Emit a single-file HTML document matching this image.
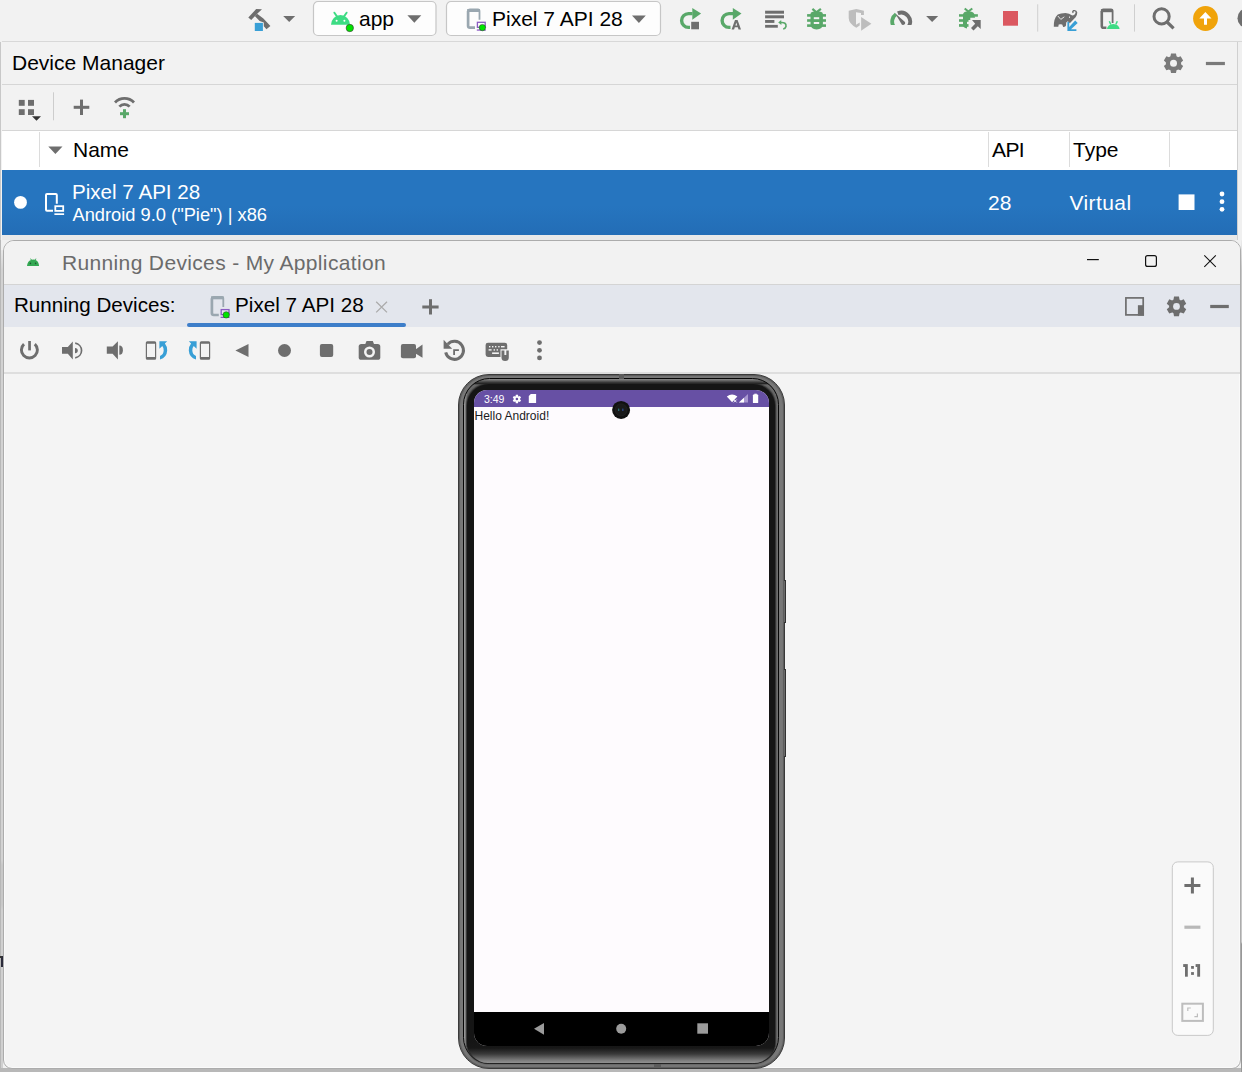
<!DOCTYPE html>
<html><head><meta charset="utf-8">
<style>
*{box-sizing:border-box;margin:0;padding:0}
html,body{width:1242px;height:1072px;overflow:hidden;background:#c4c4c4;font-family:"Liberation Sans",sans-serif;color:#000}
.a{position:absolute}
svg{position:absolute;overflow:visible}
.t{position:absolute;white-space:pre;line-height:1}
</style></head><body>

<!-- background area behind (left strip / top) -->
<div class="a" style="left:0;top:0;width:1242px;height:1072px;background:#f0f0f0"></div>
<div class="a" style="left:0;top:42px;width:1px;height:1030px;background:#b8b8b8"></div>
<div class="a" style="left:1px;top:250px;width:2px;height:822px;background:linear-gradient(#e8e8e8 0px,#d2d2d2 20px,#d2d2d2 610px,#c8c8c8 615px,#c8c8c8 655px,#d0d0d0 660px)"></div>
<div class="a" style="left:0;top:1068px;width:1242px;height:4px;background:#b8b8b8"></div>
<div class="a" style="left:1241px;top:240px;width:1px;height:832px;background:linear-gradient(#ececec 0px,#c8c8c8 30px,#c8c8c8 702px,#989898 704px)"></div>
<!-- ===== Top toolbar ===== -->
<div class="a" id="topbar" style="left:0;top:0;width:1242px;height:41px;background:#f2f2f2"></div>
<div class="a" style="left:2px;top:41px;width:1240px;height:1px;background:#d8d8d8"></div>

<!-- ===== Device Manager panel ===== -->
<div class="a" style="left:0;top:42px;width:1238px;height:198px;background:#f2f2f2;border-left:1px solid #c8c8c8;border-right:1px solid #d0d0d0"></div>
<div class="t" style="left:12px;top:52px;font-size:21px;color:#000">Device Manager</div>
<div class="a" style="left:2px;top:84px;width:1235px;height:1px;background:#d6d6d6"></div>
<div class="a" style="left:2px;top:130px;width:1235px;height:1px;background:#d6d6d6"></div>
<div class="a" style="left:2px;top:131px;width:1235px;height:39px;background:#fff"></div>
<div class="a" style="left:39px;top:132px;width:1px;height:35px;background:#dcdcdc"></div>
<div class="a" style="left:988px;top:132px;width:1px;height:35px;background:#dcdcdc"></div>
<div class="a" style="left:1069px;top:132px;width:1px;height:35px;background:#dcdcdc"></div>
<div class="a" style="left:1169px;top:132px;width:1px;height:35px;background:#dcdcdc"></div>
<div class="t" style="left:73px;top:138.5px;font-size:21px">Name</div>
<div class="t" style="left:992px;top:138.5px;font-size:21px;letter-spacing:-0.6px">API</div>
<div class="t" style="left:1073px;top:138.5px;font-size:21px">Type</div>
<div class="a" style="left:2px;top:170px;width:1235px;height:65px;background:linear-gradient(#2675bf 0%,#2675bf 55%,#236db6 100%)"></div>
<div class="a" style="left:2px;top:235px;width:1235px;height:5px;background:#e9e9e9"></div>
<div class="t" style="left:72px;top:181.5px;font-size:20.6px;color:#fff">Pixel 7 API 28</div>
<div class="t" style="left:72.5px;top:206px;font-size:18.3px;color:#fff">Android 9.0 ("Pie") | x86</div>
<div class="t" style="left:988px;top:192px;font-size:21px;color:#fff">28</div>
<div class="t" style="left:1069.5px;top:192px;font-size:21px;color:#fff;letter-spacing:0.4px">Virtual</div>

<!-- ===== Running Devices window ===== -->
<div class="a" id="win" style="left:3px;top:240px;width:1238px;height:829px;background:#f4f4f4;border:1px solid #acacac;border-radius:11px 10px 9px 9px;overflow:hidden;box-shadow:inset 0 0 0 1px #fafafa">
  <div class="a" style="left:0;top:0;width:1236px;height:43px;background:#f2f2f2"></div>
  <div class="a" style="left:0;top:43px;width:1236px;height:1px;background:#d4d4d4"></div>
  <div class="a" style="left:0;top:44px;width:1236px;height:42px;background:#e3e6ed"></div>
  <div class="a" style="left:0;top:86px;width:1236px;height:46px;background:#f3f3f3"></div>
  <div class="a" style="left:0;top:131px;width:1236px;height:2px;background:#dedede"></div>
</div>
<div class="t" style="left:62px;top:252px;font-size:21px;color:#6b6b6b;letter-spacing:0.35px">Running Devices - My Application</div>
<div class="t" style="left:14px;top:295px;font-size:20.6px">Running Devices:</div>
<div class="t" style="left:235px;top:295px;font-size:20.7px">Pixel 7 API 28</div>
<div class="a" style="left:187px;top:323px;width:219px;height:4px;border-radius:2px;background:#3d7ec9"></div>


<!-- ===== ICON OVERLAY ===== -->
<svg width="1242" height="1072" viewBox="0 0 1242 1072" style="left:0;top:0">
<!-- top toolbar -->
<g fill="#6e6e6e">
  <!-- hammer -->
  <polygon points="248.3,17.5 251.2,19.9 257.2,13.8 262,9.2 256.2,9"/>
  <polygon points="257.1,13.7 263.4,18.4 270.4,25.9 266.5,29.2 263.8,26.3 263.8,22.5 259.6,20.9 254.8,16"/>
  <rect x="254.8" y="22.9" width="8.1" height="8.1" fill="#389fd6"/>
  <polygon points="283.2,16 295.2,16 289.2,22"/>
</g>
<!-- app combo -->
<rect x="313.5" y="1.5" width="122.5" height="34" rx="4.5" fill="#fdfdfd" stroke="#c6c6c6" stroke-width="1.2"/>
<g fill="#3ddc84">
  <path d="M331,24.8 A9.5,9.7 0 0 1 350,24.8 Z"/>
  <line x1="334.4" y1="12.7" x2="337" y2="16.5" stroke="#3ddc84" stroke-width="2" stroke-linecap="round"/>
  <line x1="346.6" y1="12.7" x2="344" y2="16.5" stroke="#3ddc84" stroke-width="2" stroke-linecap="round"/>
</g>
<circle cx="336.6" cy="20.8" r="1" fill="#fff"/><circle cx="344.4" cy="20.8" r="1" fill="#fff"/>
<circle cx="349.8" cy="28" r="3.7" fill="#00e400" stroke="#40303a" stroke-width="0.6"/>
<polygon points="407.4,15.2 421.3,15.2 414.35,22.8" fill="#6e6e6e"/>
<!-- device combo -->
<rect x="446.5" y="1.5" width="214" height="34" rx="4.5" fill="#fdfdfd" stroke="#c6c6c6" stroke-width="1.2"/>
<path d="M468.1,19.5 V11.3 Q468.1,9.5 470,9.5 H478 Q479.5,9.5 479.5,11.3 V19.7" fill="none" stroke="#9aa7b0" stroke-width="1.8"/>
<rect x="467.2" y="9" width="12.7" height="3" fill="#9aa7b0"/>
<path d="M468.1,11 V26 Q468.1,27.7 470,27.7 H475" fill="none" stroke="#9aa7b0" stroke-width="2.7"/>
<rect x="477.4" y="22.3" width="7.8" height="5" fill="none" stroke="#8a5cc2" stroke-width="1.3"/>
<rect x="476.8" y="29.4" width="9" height="1.3" fill="#8a5cc2"/>
<circle cx="482.4" cy="27.6" r="3.2" fill="#00e400" stroke="#30303a" stroke-width="0.5"/>
<polygon points="632,15.5 645.8,15.5 638.9,23" fill="#6e6e6e"/>

<!-- rerun -->
<g id="rerun">
  <path d="M690,27.4 H688.5 A6.9,6.9 0 0 1 688.5,13.6 H692.5" fill="none" stroke="#59a869" stroke-width="3.4"/>
  <polygon points="692.3,7.9 701.1,13.6 692.3,19.8" fill="#59a869"/>
  <rect x="691.2" y="21.8" width="7.8" height="7.5" fill="#6e6e6e"/>
</g>
<g>
  <path d="M730.5,27.4 H729 A6.9,6.9 0 0 1 729,13.6 H733" fill="none" stroke="#59a869" stroke-width="3.4"/>
  <polygon points="732.8,7.9 741.5,13.6 732.8,19.8" fill="#59a869"/>
  <path d="M731.6,29.4 L735,20 H737.6 L741,29.4 H738.5 L737.8,27.3 H734.8 L734.1,29.4 Z M735.4,25.4 H737.2 L736.3,22.6 Z" fill="#6e6e6e" fill-rule="evenodd"/>
</g>
<!-- apply code changes -->
<g fill="#6e6e6e">
  <rect x="765.1" y="10.7" width="18.9" height="3"/>
  <rect x="765.1" y="15.3" width="18.9" height="3"/>
  <rect x="765.1" y="20" width="9.3" height="2.9"/>
  <rect x="765.1" y="24.9" width="12.7" height="2.8"/>
</g>
<path d="M780.5,22.6 Q786.5,22 786,26.5 Q785.5,28.5 783.2,29" fill="none" stroke="#59a869" stroke-width="1.6"/>
<polygon points="778.2,22.4 781.2,20 781.4,25" fill="#59a869"/>
<!-- debug bug -->
<g fill="#59a869">
  <path d="M812.4,8.8 L816.4,12.3 L820.9,8.8" fill="none" stroke="#59a869" stroke-width="2.2"/>
  <path d="M810.5,14 Q810.5,11.3 816.6,11.3 Q822.9,11.3 822.9,14 V24 Q822.9,29.4 816.6,29.4 Q810.5,29.4 810.5,24 Z"/>
  <rect x="807.1" y="14.1" width="18.9" height="2.6"/>
  <rect x="807.1" y="19.2" width="18.9" height="2.6"/>
  <rect x="807.1" y="24.3" width="18.9" height="2.6"/>
</g>
<rect x="813.8" y="17.2" width="5.4" height="2" fill="#f2f2f2"/>
<rect x="813.8" y="22" width="5.4" height="2" fill="#f2f2f2"/>
<!-- coverage -->
<g fill="#b4b4b4">
  <path fill="#bdbdbd" d="M848.7,10.7 L856.3,9.1 L863.9,10.7 V14.9 H861 V13 L856,12.3 V24.8 L859.7,22.4 V25.4 L856.3,27.7 Q848.7,23.5 848.7,18 Z"/>
  <polygon fill="#bdbdbd" points="861.1,17 871.4,23.8 861.1,30.8"/>
</g>
<!-- profiler -->
<clipPath id="gclip"><rect x="880" y="0" width="40" height="24.9"/></clipPath>
<g clip-path="url(#gclip)">
<path d="M893.36,26 A8.95,8.95 0 0 1 896.0,14.27" fill="none" stroke="#59a869" stroke-width="3.8"/>
<path d="M897.8,13.3 A8.95,8.95 0 0 1 908.94,26" fill="none" stroke="#6e6e6e" stroke-width="3.8"/>
</g>
<path d="M895.1,13.3 L905,22 Q905.8,24.6 903.2,24.9 Q901.6,24.9 901.2,23.4 Z" fill="#6e6e6e"/>
<polygon points="926.1,16.1 938.2,16.1 932.15,21.9" fill="#6e6e6e"/>
<!-- attach debugger -->
<g fill="#59a869">
  <path d="M964.7,8.5 L968.3,11.5 L972.3,8.5" fill="none" stroke="#59a869" stroke-width="2.1"/>
  <path d="M963,14.2 Q963.5,11.2 968.5,11.2 Q973,11.2 974.3,14 L975,17.8 H970.3 V20 H967 V28.5 Q963,27.5 963,25 Z"/>
  <rect x="959" y="14.2" width="18.9" height="2.5"/>
  <rect x="959" y="19.2" width="9.5" height="2.6"/>
  <rect x="959" y="24.1" width="9.5" height="2.7"/>
</g>
<polygon points="972,20.1 980.7,20.1 980.7,29.1 977.8,26.2 973.5,30.5 971,28 975.2,23.7" fill="#6e6e6e"/>
<rect x="1003" y="11" width="15" height="14.7" fill="#db5860"/>
<rect x="1037.2" y="4.3" width="1" height="27.3" fill="#cfcfcf"/>
<!-- gradle -->
<path d="M1053.8,26.8 Q1053.6,18.5 1057.8,14.6 Q1060.5,13 1065.5,13 Q1069.5,13.3 1071.8,15.2 L1073,15.6 Q1075.6,14.6 1075.6,12.3 Q1075.3,10.9 1073.9,11.3 Q1073.3,11.8 1073.8,12.6 L1072.4,13.3 Q1071.4,11.2 1073.2,10.1 Q1076.8,9.2 1077.3,12.6 Q1077.2,15.6 1075.6,17.2 L1069.8,23.2 L1067.8,21.3 L1066.2,22.5 L1066,25.6 Q1065.4,27.2 1063.2,26.9 L1062.2,24.6 Q1060.4,24 1058.7,24.6 L1058.3,26.8 Z" fill="#6e6e6e"/>
<polyline points="1057.9,16 1060.8,19.4 1064.3,16.8" fill="none" stroke="#f2f2f2" stroke-width="0.9"/>
<rect x="1069.1" y="16.5" width="0.9" height="1.4" fill="#f2f2f2"/>
<polygon points="1075.2,20.5 1077.7,23 1071,29.3 1076.4,29.3 1076.4,31 1067.4,31 1067.4,22 1069.2,22 1069.2,27.1" fill="#389fd6"/>
<!-- device manager -->
<path d="M1101.8,22 V11 Q1101.8,9.4 1103.4,9.4 H1111 Q1112.6,9.4 1112.6,11 V23" fill="none" stroke="#6e6e6e" stroke-width="1.8"/>
<rect x="1100.9" y="9.2" width="11.9" height="3" fill="#6e6e6e"/>
<path d="M1101.8,11 V26 Q1101.8,27.8 1103.4,27.8 H1106.4" fill="none" stroke="#6e6e6e" stroke-width="2.6"/>
<path d="M1107,29.1 A6.3,5.2 0 0 1 1119.6,29.1 Z" fill="#3ddc84"/>
<line x1="1109.3" y1="21.3" x2="1110.8" y2="24.5" stroke="#3ddc84" stroke-width="1.5"/>
<line x1="1117.3" y1="21.3" x2="1115.8" y2="24.5" stroke="#3ddc84" stroke-width="1.5"/>
<rect x="1134" y="4.3" width="1" height="27.3" fill="#cfcfcf"/>
<!-- search -->
<circle cx="1161.6" cy="16.4" r="7.6" fill="none" stroke="#6e6e6e" stroke-width="3"/>
<line x1="1167" y1="22" x2="1173.6" y2="28.4" stroke="#6e6e6e" stroke-width="3.2"/>
<circle cx="1205.5" cy="18.5" r="12.4" fill="#f0a30a"/>
<polygon points="1199.3,18.6 1205.4,12 1211.5,18.6 1207,18.6 1207,24.7 1204,24.7 1204,18.6" fill="#fff"/>
<circle cx="1248" cy="18.2" r="10.5" fill="#6e6e6e"/>

<!-- Device Manager header icons -->
<g fill="#7a7a7a">
  <path d="M1170.46,56.33 L1171.03,53.61 L1175.97,53.61 L1176.54,56.33 L1176.92,56.52 L1177.30,56.72 L1177.66,56.94 L1178.01,57.19 L1180.65,56.31 L1183.13,60.60 L1181.05,62.45 L1181.09,62.87 L1181.10,63.30 L1181.09,63.73 L1181.05,64.15 L1183.13,66.00 L1180.65,70.29 L1178.01,69.41 L1177.66,69.66 L1177.30,69.88 L1176.92,70.08 L1176.54,70.27 L1175.97,72.99 L1171.03,72.99 L1170.46,70.27 L1170.08,70.08 L1169.70,69.88 L1169.34,69.66 L1168.99,69.41 L1166.35,70.29 L1163.87,66.00 L1165.95,64.15 L1165.91,63.73 L1165.90,63.30 L1165.91,62.87 L1165.95,62.45 L1163.87,60.60 L1166.35,56.31 L1168.99,57.19 L1169.34,56.94 L1169.70,56.72 L1170.08,56.52 Z"/>
  <rect x="1205.9" y="61.9" width="19" height="3.2"/>
</g>
<circle cx="1173.5" cy="63.3" r="3.5" fill="#f2f2f2"/>
<!-- DM toolbar -->
<g fill="#6e6e6e">
  <rect x="18.8" y="99.9" width="5.9" height="5.9"/>
  <rect x="28" y="99.9" width="6" height="5.9"/>
  <rect x="18.8" y="109.2" width="5.9" height="5.8"/>
  <rect x="28" y="109.2" width="6" height="5.8"/>
  <polygon points="32,116.2 41,116.2 36.5,120.7" fill="#333"/>
  <rect x="53" y="92.3" width="1" height="28" fill="#cdcdcd"/>
  <rect x="73.7" y="105.8" width="15.6" height="3"/>
  <rect x="80" y="99.6" width="3" height="15.4"/>
</g>
<path d="M115,102.4 A13.3,13.3 0 0 1 134,102.4" fill="none" stroke="#6e6e6e" stroke-width="2.8"/>
<path d="M119.4,106.6 A6.8,6.8 0 0 1 129.6,106.6" fill="none" stroke="#6e6e6e" stroke-width="2.8"/>
<rect x="120" y="112.2" width="9" height="3" fill="#59a869"/>
<rect x="123" y="109.2" width="3" height="9" fill="#59a869"/>
<!-- table -->
<polygon points="48.3,146.4 62.5,146.4 55.4,154.1" fill="#6e6e6e"/>
<circle cx="20.5" cy="202.4" r="6.4" fill="#fff"/>
<path d="M46,203.8 V195 Q46,194 47,194 H55.8 Q56.8,194 56.8,195 V203.8" fill="none" stroke="#fff" stroke-width="2"/>
<path d="M46,195 V209.8 Q46,210.8 47,210.8 H53" fill="none" stroke="#fff" stroke-width="2"/>
<rect x="55.3" y="206.2" width="7.9" height="4.7" fill="none" stroke="#fff" stroke-width="1.8"/>
<rect x="54.4" y="213.3" width="9.7" height="1.7" fill="#fff"/>
<rect x="1178.6" y="194.4" width="15.9" height="15.6" fill="#fff"/>
<circle cx="1222" cy="194" r="2.4" fill="#fff"/><circle cx="1222" cy="201.7" r="2.4" fill="#fff"/><circle cx="1222" cy="209.3" r="2.4" fill="#fff"/>
</svg>


<!-- texts over svg -->
<div class="t" style="left:359px;top:8px;font-size:21px">app</div>
<div class="t" style="left:492px;top:8px;font-size:21px">Pixel 7 API 28</div>

<!-- ===== PHONE ===== -->
<div class="a" style="left:457.5px;top:373.5px;width:327px;height:695px;border-radius:31px;background:#787878;border:1px solid #3a3a3a;box-shadow:inset 0 0 1px 1px #5a5a5a"></div>
<div class="a" style="left:462.6px;top:378.2px;width:316.6px;height:685.6px;border-radius:26.5px;background:linear-gradient(#8c8c8c 0px,#5a5a5a 2px,#262626 4.5px,rgba(21,21,21,0) 6px),linear-gradient(90deg,#a0a0a0 0px,#6a6a6a 3.5px,#6a6a6a 313px,#a0a0a0 316.6px);border:1px solid #080808"></div>
<div class="a" style="left:466.8px;top:383.5px;width:308.6px;height:679.3px;border-radius:22px 22px 21px 21px;background:#151515;box-shadow:0 0 1.5px 0.6px #2a2a2a"></div>
<div class="a" style="left:466.8px;top:1040px;width:308.6px;height:22.8px;border-radius:0 0 21px 21px;background:linear-gradient(#151515 0px,#171717 8px,#3a3a3a 14px,#7a7a7a 20px,#909090 22.8px)"></div>
<div class="a" style="left:474px;top:390px;width:295px;height:656px;border-radius:13px;background:#fefbfe;overflow:hidden">
  <div class="a" style="left:0;top:0;width:295px;height:16.5px;background:#6750a4"></div>
  <div class="a" style="left:0;top:621.5px;width:295px;height:35px;background:#000"></div>
</div>
<div class="t" style="left:484px;top:393.5px;font-size:10.5px;color:#fff">3:49</div>
<div class="t" style="left:474.5px;top:410px;font-size:12px;color:#1c1b1f">Hello Android!</div>
<div class="a" style="left:783.5px;top:579.5px;width:2.5px;height:43px;background:#6a6a6a;border:0.5px solid #333;border-left:none"></div>
<div class="a" style="left:783.5px;top:668.5px;width:2.5px;height:88px;background:#6a6a6a;border:0.5px solid #333;border-left:none"></div>
<div class="a" style="left:618.5px;top:374px;width:5.5px;height:4.5px;background:#5c5c5c"></div>
<div class="a" style="left:654.3px;top:1063.8px;width:6.7px;height:3.5px;background:#5c5c5c"></div>


<!-- ===== RUNNING DEVICES OVERLAY ===== -->
<svg width="1242" height="1072" viewBox="0 0 1242 1072" style="left:0;top:0">
<!-- title bar android -->
<path d="M27,265.9 Q27.5,261 31,260 L30,258.8 L30.6,258.4 L32,259.7 Q33,259.5 34.5,259.7 L35.9,258.4 L36.5,258.8 L35.5,260 Q38.6,261 39.1,265.9 Z" fill="#34a853"/>
<circle cx="30.4" cy="263.4" r="0.8" fill="#1f5a30"/><circle cx="35.6" cy="263.4" r="0.8" fill="#1f5a30"/>
<!-- window controls -->
<rect x="1087" y="259" width="11.8" height="1.2" fill="#111"/>
<rect x="1145.6" y="255.6" width="10.8" height="10.8" rx="2" fill="none" stroke="#111" stroke-width="1.2"/>
<path d="M1204.3,255.3 L1215.8,266.8 M1215.8,255.3 L1204.3,266.8" stroke="#111" stroke-width="1.1"/>
<!-- tab -->
<g transform="translate(-256.2,287.3)">
<path d="M468.1,19.5 V11.3 Q468.1,9.5 470,9.5 H478 Q479.5,9.5 479.5,11.3 V19.7" fill="none" stroke="#9aa7b0" stroke-width="1.8"/>
<rect x="467.2" y="9" width="12.7" height="3" fill="#9aa7b0"/>
<path d="M468.1,11 V26 Q468.1,27.7 470,27.7 H475" fill="none" stroke="#9aa7b0" stroke-width="2.7"/>
<rect x="477.4" y="22.3" width="7.8" height="5" fill="none" stroke="#8a5cc2" stroke-width="1.3"/>
<rect x="476.8" y="29.4" width="9" height="1.3" fill="#8a5cc2"/>
<circle cx="482.4" cy="27.6" r="3.2" fill="#00e400" stroke="#30303a" stroke-width="0.5"/>
</g>
<path d="M376.2,301.8 L387,312.4 M387,301.8 L376.2,312.4" stroke="#ababab" stroke-width="1.3"/>
<rect x="422.3" y="305.5" width="16.3" height="3" fill="#6e6e6e"/>
<rect x="429" y="299.2" width="3" height="15.3" fill="#6e6e6e"/>
<!-- right tab icons -->
<rect x="1125.9" y="297.9" width="17.3" height="17" fill="none" stroke="#6e6e6e" stroke-width="1.7"/>
<rect x="1137.9" y="305.2" width="6.1" height="10.5" fill="#6e6e6e"/>
<path d="M1173.47,299.65 L1174.03,296.61 L1178.97,296.61 L1179.53,299.65 L1179.87,299.81 L1180.20,299.99 L1180.52,300.19 L1180.83,300.40 L1183.74,299.36 L1186.22,303.65 L1183.86,305.65 L1183.89,306.03 L1183.90,306.40 L1183.89,306.77 L1183.86,307.15 L1186.22,309.15 L1183.74,313.44 L1180.83,312.40 L1180.52,312.61 L1180.20,312.81 L1179.87,312.99 L1179.53,313.15 L1178.97,316.19 L1174.03,316.19 L1173.47,313.15 L1173.13,312.99 L1172.80,312.81 L1172.48,312.61 L1172.17,312.40 L1169.26,313.44 L1166.78,309.15 L1169.14,307.15 L1169.11,306.77 L1169.10,306.40 L1169.11,306.03 L1169.14,305.65 L1166.78,303.65 L1169.26,299.36 L1172.17,300.40 L1172.48,300.19 L1172.80,299.99 L1173.13,299.81 Z" fill="#6e6e6e"/>
<circle cx="1176.5" cy="306.4" r="3.4" fill="#e3e6ed"/>
<rect x="1210.2" y="304.9" width="18.6" height="3.2" fill="#6e6e6e"/>
<!-- emulator toolbar -->
<g fill="#6e6e6e">
  <path d="M24,344.1 A8,8 0 1 0 34.8,344.1" fill="none" stroke="#6e6e6e" stroke-width="2.9"/>
  <rect x="28.2" y="341" width="2.7" height="9.4"/>
  <polygon points="62,346.9 67.8,346.9 72.8,341.6 72.8,359.5 67.8,353.7 62,353.7"/>
  <path d="M75,347.9 A2.8,2.7 0 0 1 75,353.3 Z"/>
  <path d="M75.2,343.2 A7.6,7.4 0 0 1 75.2,357.8" fill="none" stroke="#6e6e6e" stroke-width="1.7"/>
  <polygon points="106.8,346.6 112.6,346.6 117.9,341.2 117.9,359.6 112.6,353.8 106.8,353.8"/>
  <path d="M119.3,345.6 A3.6,4.6 0 0 1 119.3,354.8 Z"/>
  <polygon points="235.4,350.5 248.5,344 248.5,357"/>
  <circle cx="284.5" cy="350.5" r="6.5"/>
  <rect x="319.9" y="344" width="13.3" height="13" rx="2"/>
  <rect x="358.7" y="344" width="21.6" height="15.8" rx="2.6"/>
  <polygon points="365.1,344.5 366.5,341 372.8,341 374.2,344.5"/>
  <rect x="400.9" y="344" width="15.1" height="14.2" rx="2"/>
  <polygon points="415.5,349.5 422.5,344.6 422.5,357.8 415.5,353.5"/>
  <path d="M445.7,352.3 A9,9 0 1 0 447.8,344.3" fill="none" stroke="#6e6e6e" stroke-width="3"/>
  <polygon points="443.6,339.8 443.6,348.8 452.2,348.8"/>
  <path d="M454.1,355 V350.1 H458.9" fill="none" stroke="#6e6e6e" stroke-width="1.8"/>
  <path d="M488,342.7 H504.8 Q507.2,342.7 507.2,345 V349.3 H500.5 V356.9 H488 Q485.6,356.9 485.6,354.5 V345 Q485.6,342.7 488,342.7 Z"/>
  <path d="M501.5,350.4 H504.4 V355 H506.3 V350.4 H508.8 V357.5 Q508.8,361.1 505.15,361.1 Q501.5,361.1 501.5,357.5 Z"/>
  <circle cx="539.5" cy="342.6" r="2.4"/><circle cx="539.5" cy="350.3" r="2.4"/><circle cx="539.5" cy="357.9" r="2.4"/>
</g>
<g fill="#f3f3f3">
  <circle cx="369.5" cy="352" r="5.5"/>
  <rect x="489" y="346" width="1.4" height="1.4"/><rect x="492" y="346" width="1.4" height="1.4"/><rect x="495" y="346" width="1.4" height="1.4"/><rect x="498.2" y="346" width="1.4" height="1.4"/><rect x="501" y="346" width="3.6" height="1.4"/>
  <rect x="488.6" y="349.2" width="3" height="1.4"/><rect x="493.6" y="349.2" width="1.4" height="1.4"/><rect x="496.6" y="349.2" width="1.4" height="1.4"/>
  <rect x="492.1" y="352.4" width="6.8" height="1.6"/>
</g>
<circle cx="369.5" cy="352" r="3" fill="#6e6e6e"/>
<g id="rotR">
  <path d="M147.3,341.2 H154.7 Q156.2,341.2 156.2,342.7 V358.2 Q156.2,359.7 154.7,359.7 H147.3 Q145.8,359.7 145.8,358.2 V342.7 Q145.8,341.2 147.3,341.2 Z M147,343.8 V357.1 H155 V343.8 Z" fill="#6e6e6e" fill-rule="evenodd"/>
  <path d="M159.4,341.2 L167.2,341.2 L164.9,343.5 Q167.4,346.5 167.2,350.5 Q166.8,357.5 160,359.5 L160,356 Q163.5,354.5 163.7,350.5 Q163.8,347.8 162.3,346.1 L159.4,348.7 Z" fill="#389fd6"/>
</g>
<g transform="translate(356,0) scale(-1,1)">
  <path d="M147.3,341.2 H154.7 Q156.2,341.2 156.2,342.7 V358.2 Q156.2,359.7 154.7,359.7 H147.3 Q145.8,359.7 145.8,358.2 V342.7 Q145.8,341.2 147.3,341.2 Z M147,343.8 V357.1 H155 V343.8 Z" fill="#6e6e6e" fill-rule="evenodd"/>
  <path d="M159.4,341.2 L167.2,341.2 L164.9,343.5 Q167.4,346.5 167.2,350.5 Q166.8,357.5 160,359.5 L160,356 Q163.5,354.5 163.7,350.5 Q163.8,347.8 162.3,346.1 L159.4,348.7 Z" fill="#389fd6"/>
</g>
<!-- zoom controls -->
<rect x="1172.3" y="861.9" width="41" height="173.5" rx="5.5" fill="#fafafa" stroke="#c9c9c9" stroke-width="1"/>
<rect x="1184.4" y="884" width="16" height="3" fill="#6e6e6e"/>
<rect x="1190.9" y="877.5" width="3" height="16" fill="#6e6e6e"/>
<rect x="1184.4" y="925.6" width="16" height="3.2" fill="#b8b8b8"/>
<rect x="1182.3" y="1003.7" width="20.6" height="17.2" fill="none" stroke="#bdbdbd" stroke-width="2"/>
<path d="M1187.8,1011 V1008 H1190.8 M1197.4,1013.6 V1016.6 H1194.4" fill="none" stroke="#bdbdbd" stroke-width="1.2"/>
<!-- phone status bar -->
<path d="M515.57,396.31 L515.81,394.84 L517.99,394.84 L518.23,396.31 L518.31,396.35 L518.40,396.40 L518.48,396.45 L518.57,396.51 L519.96,395.98 L521.05,397.86 L519.89,398.80 L519.90,398.90 L519.90,399.00 L519.90,399.10 L519.89,399.20 L521.05,400.14 L519.96,402.02 L518.57,401.49 L518.48,401.55 L518.40,401.60 L518.31,401.65 L518.23,401.69 L517.99,403.16 L515.81,403.16 L515.57,401.69 L515.49,401.65 L515.40,401.60 L515.32,401.55 L515.23,401.49 L513.84,402.02 L512.75,400.14 L513.91,399.20 L513.90,399.10 L513.90,399.00 L513.90,398.90 L513.91,398.80 L512.75,397.86 L513.84,395.98 L515.23,396.51 L515.32,396.45 L515.40,396.40 L515.49,396.35 Z" fill="#fff"/>
<circle cx="516.9" cy="399" r="1.3" fill="#6750a4"/>
<path d="M530.8,393.9 H536.1 V403 H528.8 V395.9 Z" fill="#fff"/>
<path d="M726.8,396.5 Q732,392.5 737.4,396.5 L732.1,402.3 Z" fill="#fff"/>
<path d="M733.8,399.6 L736.6,402.4 M736.6,399.6 L733.8,402.4" stroke="#fff" stroke-width="0.9"/>
<polygon points="738.9,402.6 748,394 748,402.6" fill="#a897d0"/>
<polygon points="738.9,402.6 744,397.8 744,402.6" fill="#fff"/>
<rect x="752.9" y="394.6" width="5.3" height="8.4" rx="0.6" fill="#fff"/>
<rect x="754.3" y="393.7" width="2.5" height="1.2" fill="#fff"/>
<!-- camera -->
<circle cx="621.1" cy="409.9" r="9" fill="#111"/>
<circle cx="621.1" cy="409.9" r="6" fill="#1a1a1a" stroke="#222" stroke-width="0.8"/>
<rect x="618" y="408.6" width="1.3" height="2.4" fill="#2a6a70"/><rect x="622.3" y="408.6" width="1.1" height="2.4" fill="#3050a0"/>
<!-- nav bar -->
<polygon points="534,1028.8 544,1022.9 544,1034.7" fill="#9b9b9b"/>
<circle cx="621.2" cy="1028.7" r="5" fill="#9b9b9b"/>
<rect x="697.3" y="1023.3" width="10.7" height="10.4" fill="#9b9b9b"/>
</svg>

<svg width="1242" height="1072" style="left:0;top:0"><g fill="#6e6e6e">
<rect x="1185" y="964.1" width="2.8" height="12.6"/><rect x="1183.2" y="964.1" width="2.2" height="2.9"/>
<rect x="1191.1" y="966" width="2.8" height="2.8"/><rect x="1191.1" y="972.1" width="2.8" height="2.8"/>
<rect x="1197.2" y="964.1" width="2.9" height="12.6"/><rect x="1195.6" y="964.1" width="2" height="2.9"/>
</g></svg>
<div class="a" style="left:1px;top:956px;width:2px;height:11px;background:#2a2a3a"></div>
<div class="a" style="left:0;top:956px;width:2px;height:2px;background:#333"></div>
</body></html>
